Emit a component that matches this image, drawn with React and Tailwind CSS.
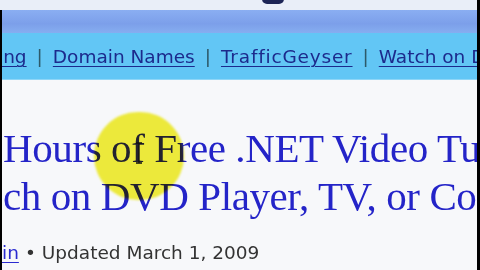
import React from 'react';

const navLinks = [
    { label: 'ing', cls: '' },
    { label: 'Domain Names', cls: '' },
    { label: 'TrafficGeyser', cls: 'tracking-[0.8px]' },
    { label: 'Watch on DVD', cls: '' },
];

const App = () => {
    return (
        <div className="w-[480px] h-[270px] overflow-hidden bg-black flex">
            <div className="w-[2px] shrink-0 bg-[#e9eef8]">
                <div className="h-[10px]" />
                <div className="h-[260px] bg-black" />
            </div>
            <div className="flex-1 flex flex-col bg-[#f7f8fa] overflow-hidden relative">
                {/* top of the banner */}
                <div className="h-[10px] bg-[#e9eef8] relative">
                    <div className="absolute left-[260px] -top-[6px] w-[22px] h-[10px] rounded-full bg-[#1c2456]" />
                </div>
                <div className="h-[23px] bg-[linear-gradient(180deg,#8aaef2_0%,#7c9fea_60%,#86aef0_100%)]" />

                {/* link bar */}
                <div
                    className="h-[47px] bg-[#62c6f5] border-b border-[#8fd6f7] flex items-center pt-[2px] -ml-[4px] whitespace-nowrap text-[18.5px] text-[#1c2a8c]"
                    style={{ fontFamily: '"DejaVu Sans", Verdana, sans-serif' }}
                >
                    {navLinks.map((link, i) => (
                        <React.Fragment key={link.label}>
                            {i > 0 && <span className="text-[#2d5a6a] mx-[10px]">|</span>}
                            <a className={`underline decoration-1 underline-offset-[3px] ${link.cls}`}>{link.label}</a>
                        </React.Fragment>
                    ))}
                </div>

                {/* headline */}
                <div
                    className="relative mt-[44px] pl-[1px] whitespace-nowrap text-[41px] leading-[48px] text-[#2424c8]"
                    style={{ fontFamily: '"Liberation Serif", "Times New Roman", serif' }}
                >
                    <div className="tracking-[-0.4px]">Hours of Free .NET Video Tutorials</div>
                    <div className="tracking-[-0.4px]">ch on DVD Player, TV, or Computer</div>
                    <div className="absolute left-[92px] top-[-12px] w-[90px] h-[88px] rounded-full bg-[#f4f03c] mix-blend-multiply blur-[1px]" />
                    <svg className="absolute left-[132px] top-[18px]" width="10" height="22" viewBox="0 0 10 22">
                        <path d="M2 1h6M5 1v20M2 21h6" stroke="#111" strokeWidth="1.3" fill="none" />
                    </svg>
                </div>

                {/* byline */}
                <div
                    className="mt-[19px] whitespace-nowrap text-[18.5px] text-[#333]"
                    style={{ fontFamily: '"DejaVu Sans", Verdana, sans-serif' }}
                >
                    <a className="text-[#2a2ad0] underline decoration-1 underline-offset-[3px]">in</a>
                    <span className="mx-[6px]">•</span>
                    <span>Updated March 1, 2009</span>
                </div>
            </div>
            <div className="w-[3px] shrink-0 bg-black" />
        </div>
    );
};

export default App;
